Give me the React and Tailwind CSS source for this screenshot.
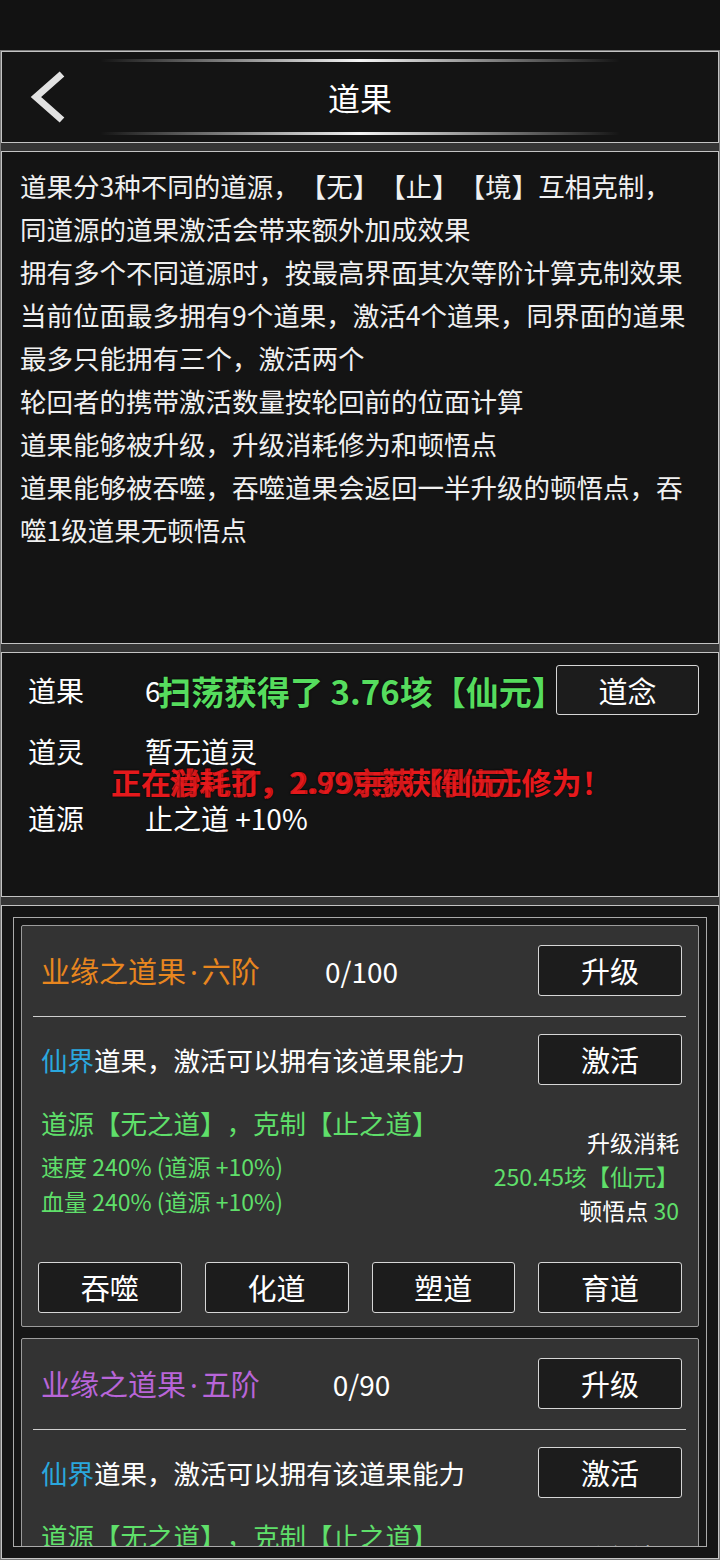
import React from 'react';

const Btn = ({ children, className = '' }) => (
  <button
    className={`h-[51px] w-[144px] bg-[#1c1c1c] border-[1.5px] border-[#d6d6d6] rounded-[3px] text-[29px] text-white leading-none flex items-center justify-center ${className}`}
  >
    {children}
  </button>
);

const intro = [
  '道果分3种不同的道源，【无】【止】【境】互相克制，',
  '同道源的道果激活会带来额外加成效果',
  '拥有多个不同道源时，按最高界面其次等阶计算克制效果',
  '当前位面最多拥有9个道果，激活4个道果，同界面的道果',
  '最多只能拥有三个，激活两个',
  '轮回者的携带激活数量按轮回前的位面计算',
  '道果能够被升级，升级消耗修为和顿悟点',
  '道果能够被吞噬，吞噬道果会返回一半升级的顿悟点，吞',
  '噬1级道果无顿悟点',
];

const FruitCard = ({ name, rank, titleColor, count }) => (
  <div className="shrink-0 bg-[#333333] border border-[#9c9c9c] rounded-[2px] pt-[19px] pb-[13px]">
    {/* title row */}
    <div className="grid grid-cols-[1fr_auto_1fr] items-center pl-[19px] pr-[16px]">
      <span className={`text-[29px] leading-none ${titleColor}`}>
        {name}
        <span className="font-['Noto_Sans',sans-serif] px-[4px]">·</span>
        {rank}
      </span>
      <span className="text-[28px] leading-none text-white">{count}</span>
      <div className="flex justify-end">
        <Btn>升级</Btn>
      </div>
    </div>

    <div className="h-px bg-[#cfcfcf] ml-[11px] mr-[12px] mt-[20px]" />

    {/* activate row */}
    <div className="flex items-center justify-between pl-[19px] pr-[16px] mt-[17px]">
      <span className="text-[26.5px] text-white">
        <span className="text-[#2aa7de]">仙界</span>道果，激活可以拥有该道果能力
      </span>
      <Btn>激活</Btn>
    </div>

    {/* stats */}
    <div className="flex justify-between items-start pl-[19px] pr-[19px] mt-[20px]">
      <div className="text-[#5fdf6a]">
        <div className="text-[26.5px] leading-[36px]">道源【无之道】，克制【止之道】</div>
        <div className="mt-[8px] text-[23px] leading-[35px]">速度 240% (道源 +10%)</div>
        <div className="text-[23px] leading-[35px]">血量 240% (道源 +10%)</div>
      </div>
      <div className="pt-[20px] text-right text-[23px] leading-[34px] text-white">
        <div>升级消耗</div>
        <div className="text-[#5fdf6a]">250.45垓【仙元】</div>
        <div>
          顿悟点 <span className="text-[#5fdf6a]">30</span>
        </div>
      </div>
    </div>

    {/* actions */}
    <div className="grid grid-cols-4 gap-[23px] px-[16px] mt-[35px]">
      {['吞噬', '化道', '塑道', '育道'].map((label) => (
        <Btn key={label} className="w-full">
          {label}
        </Btn>
      ))}
    </div>
  </div>
);

const App = () => {
  return (
    <div className="w-[720px] h-[1560px] bg-[#121212] overflow-hidden font-['Noto_Sans_CJK_SC','Noto_Sans',sans-serif] text-white [text-spacing-trim:space-all]">
      <div className="h-[50px]" />

      <div className="border border-[#7a7a7a] bg-[#353535] flex flex-col gap-[8px]">
        {/* Header */}
        <div className="h-[92px] border border-[#c4c4c4] bg-[#141414] flex flex-col pt-[7px] pb-[7px]">
          <div className="h-[3px] w-[520px] mx-auto bg-linear-to-r from-transparent via-[#f4f4f4] to-transparent" />
          <div className="flex-1 grid grid-cols-[1fr_auto_1fr] items-center">
            <div className="pl-[27px]">
              <svg width="38" height="52" viewBox="0 0 38 52">
                <polyline
                  points="33,3 7,26 33,49"
                  fill="none"
                  stroke="#e2e2e2"
                  strokeWidth="7"
                  strokeLinejoin="miter"
                />
              </svg>
            </div>
            <h1 className="text-[32px] leading-none text-white">道果</h1>
            <div />
          </div>
          <div className="h-[3px] w-[520px] mx-auto bg-linear-to-r from-transparent via-[#f4f4f4] to-transparent" />
        </div>

        {/* Rules */}
        <div className="h-[493px] border border-[#c4c4c4] bg-[#141414] pt-[12px] pl-[18px]">
          {intro.map((line) => (
            <p key={line} className="text-[26.5px] leading-[43px] text-[#f0f0f0] whitespace-nowrap">
              {line}
            </p>
          ))}
        </div>

        {/* Summary */}
        <div className="relative h-[245px] border border-[#c4c4c4] bg-[#141414] pt-[12px] pl-[26px] pr-[19px] text-[28px]">
          <div className="flex items-center h-[50px]">
            <span className="w-[117px] leading-none">道果</span>
            <span className="leading-none">6</span>
            <button className="ml-auto h-[50px] w-[143px] bg-[#1c1c1c] border-[1.5px] border-[#d6d6d6] rounded-[3px] text-[29px] leading-none text-white">
              道念
            </button>
          </div>
          <div className="flex items-center h-[40px] mt-[16px]">
            <span className="w-[117px] leading-none">道灵</span>
            <span className="leading-none">暂无道灵</span>
          </div>
          <div className="flex items-center h-[40px] mt-[27px]">
            <span className="w-[117px] leading-none">道源</span>
            <span className="leading-none">止之道 +10%</span>
          </div>

          {/* floating messages */}
          <span className="absolute top-[18px] left-[156px] text-[33px] leading-[40px] font-bold text-[#56dc5e] whitespace-nowrap [text-shadow:0_0_2px_#000]">
            扫荡获得了 3.76垓【仙元】
          </span>
          <span className="absolute top-[110px] left-[109px] text-[30px] leading-[36px] font-bold text-[#e5191c] whitespace-nowrap [text-shadow:0_0_2px_#000]">
            正在秒耗打，2.799京获得仙元修为！
          </span>
          <span className="absolute top-[110px] left-[167px] text-[30px] leading-[36px] font-bold text-[#e5191c] opacity-90 whitespace-nowrap [text-shadow:0_0_2px_#000]">
            消耗了，2.99京获【仙元】
          </span>
        </div>

        {/* Fruit list */}
        <div className="h-[654px] border border-[#c4c4c4] bg-[#141414] p-[11px]">
          <div className="h-[630px] border border-[#aaaaaa] bg-[#161616] p-[7px] flex flex-col gap-[11px] overflow-hidden">
            <FruitCard name="业缘之道果" rank="六阶" titleColor="text-[#e8861f]" count="0/100" />
            <FruitCard name="业缘之道果" rank="五阶" titleColor="text-[#b865d8]" count="0/90" />
          </div>
        </div>
      </div>
    </div>
  );
};

export default App;
